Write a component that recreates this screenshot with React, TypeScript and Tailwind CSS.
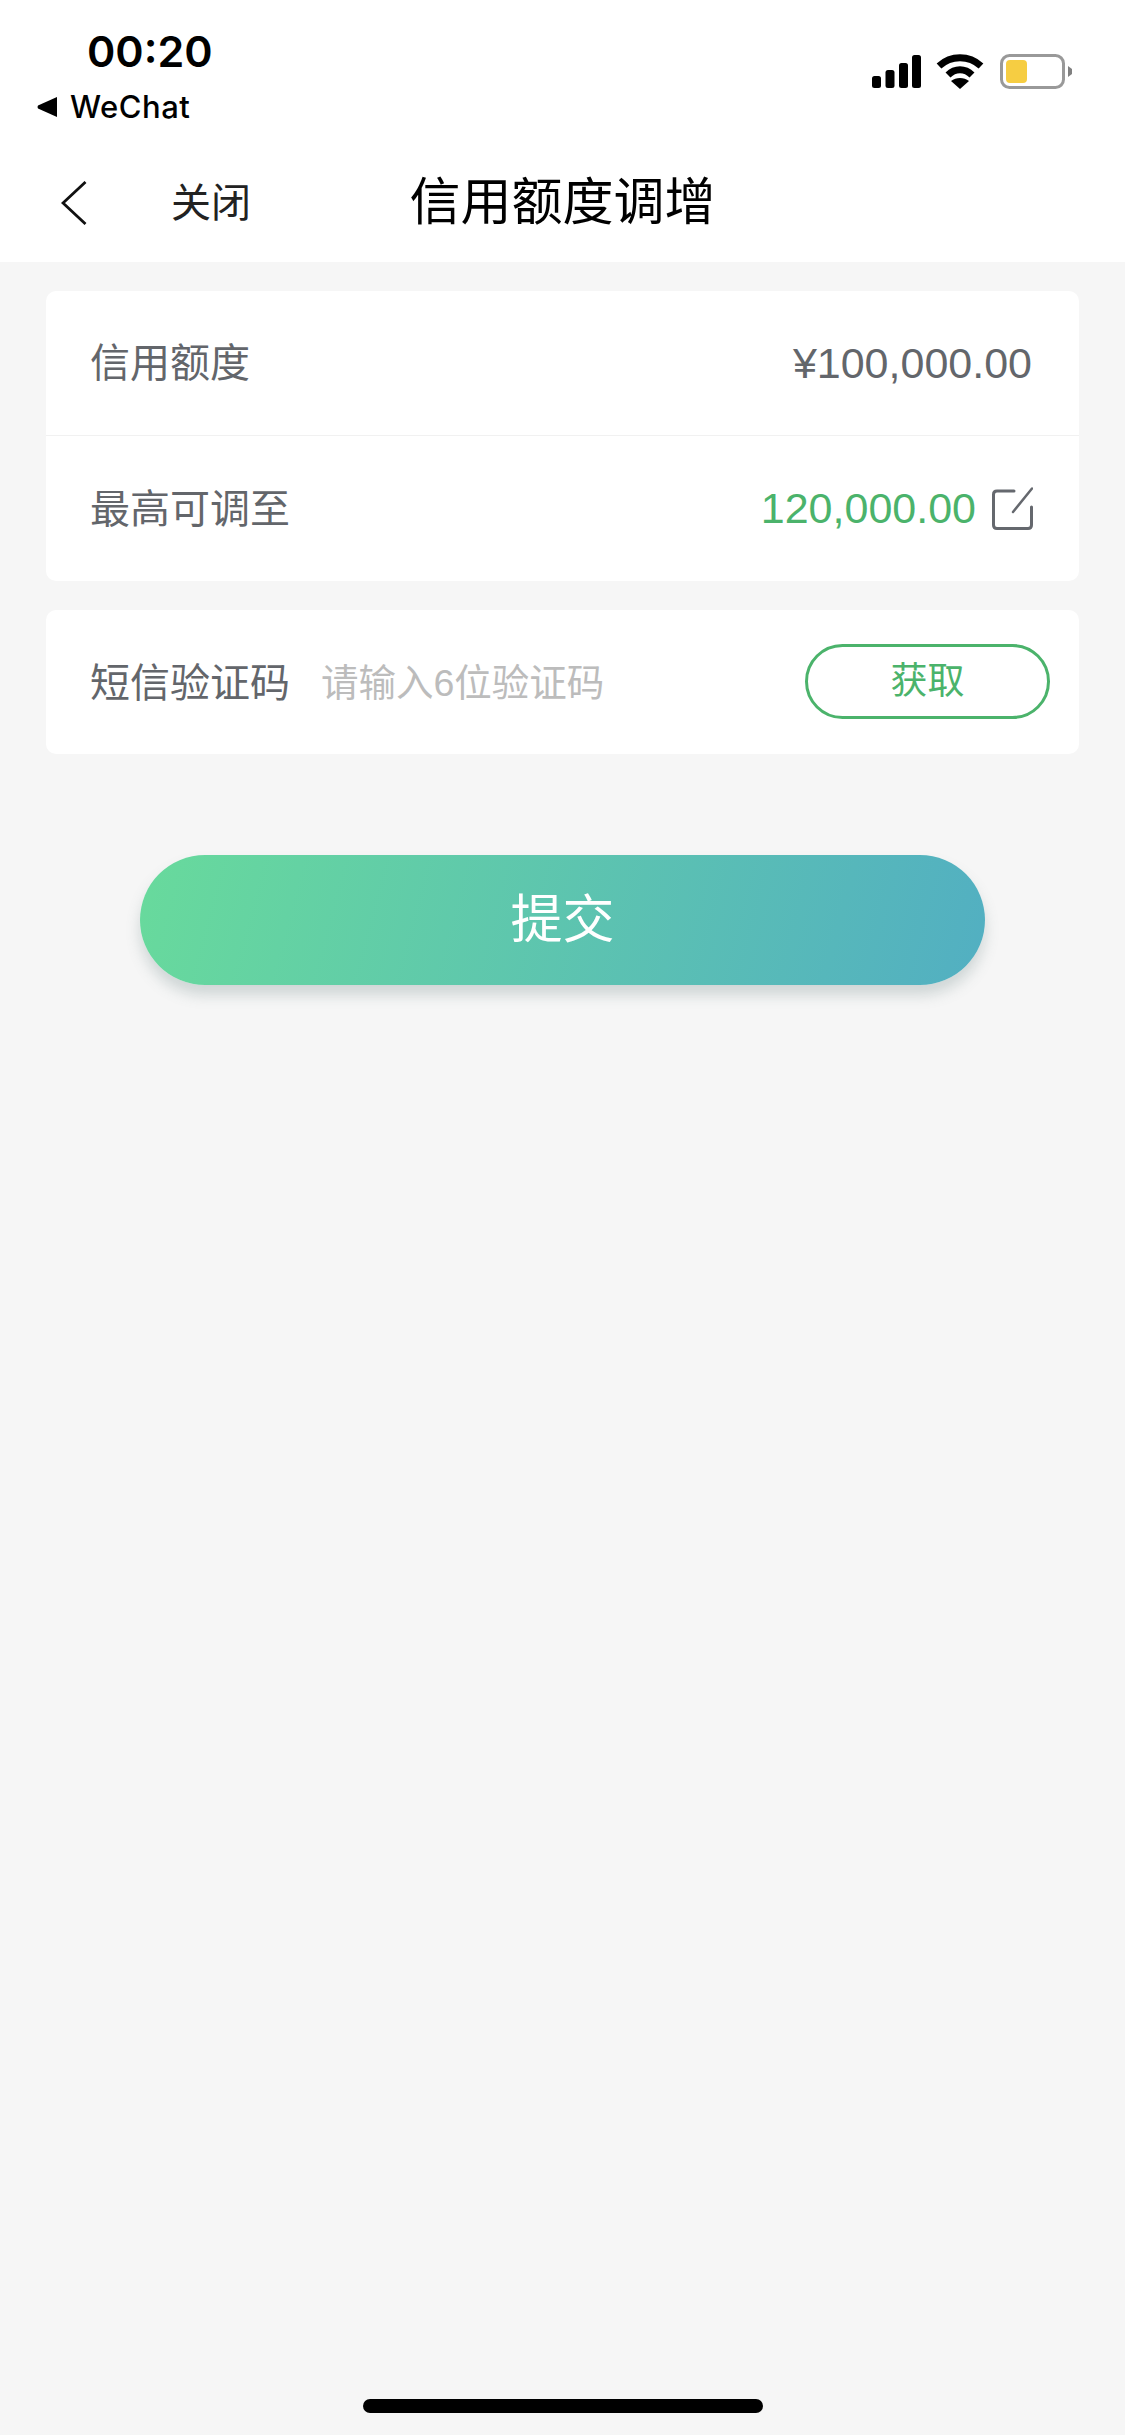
const CJK = "font-['Liberation_Sans','Noto_Sans_CJK_SC',sans-serif]";

function Signal() {
  return (
    <svg width="49" height="33" viewBox="0 0 49 33" fill="#000">
      <rect x="0" y="21" width="9" height="12" rx="2.5" />
      <rect x="13.5" y="15" width="9" height="18" rx="2.5" />
      <rect x="27" y="8" width="9" height="25" rx="2.5" />
      <rect x="40" y="0" width="9" height="33" rx="2.5" />
    </svg>
  );
}

function Wifi() {
  return (
    <svg width="48" height="36" viewBox="0 0 48 36" fill="none">
      <path d="M3 13 C15 2 33 2 45 13" stroke="#000" strokeWidth="7" strokeLinecap="butt" />
      <path d="M12 22 C19 15 29 15 36 22" stroke="#000" strokeWidth="7" strokeLinecap="butt" />
      <path d="M24 36 L15 28 C20 24 28 24 33 28 Z" fill="#000" />
    </svg>
  );
}

function Battery() {
  return (
    <svg width="73" height="35" viewBox="0 0 73 35" fill="none">
      <rect x="1.5" y="1.5" width="62" height="32" rx="8" stroke="#999999" strokeWidth="3" />
      <rect x="6" y="6" width="21" height="23" rx="4" fill="#f6cd42" />
      <path d="M68 12 L72 15 V20 L68 23 Z" fill="#808080" />
    </svg>
  );
}

function EditIcon() {
  return (
    <svg width="41" height="43" viewBox="0 0 41 43" fill="none" stroke="#65686e" strokeWidth="3" strokeLinecap="round">
      <path d="M22 4 H5 Q1.5 4 1.5 7.500 V38 Q1.500 41.500 5 41.500 H36 Q39.500 41.500 39.500 38 V20" />
      <path d="M21 25 L40 1.500" strokeWidth="2.500" />
    </svg>
  );
}

export default function App() {
  return (
    <div className={`min-h-[2435px] w-[1125px] bg-[#f6f6f6] flex flex-col ${CJK}`}>
      <header className="bg-white h-[262px] flex flex-col shrink-0">
        <div className="h-[140px] flex justify-between items-start">
          <div className="flex flex-col">
            <div className="pl-[87px] pt-[26px] text-[43px] leading-[50px] font-semibold text-black font-['Inter',sans-serif]">
              00:20
            </div>
            <div className="pl-[37px] pt-[15px] flex items-center gap-[13px] text-black font-['Inter',sans-serif]">
              <svg width="20" height="20" viewBox="0 0 20 20" fill="#000">
                <path d="M20 0 V20 L1 11.500 Q0 10 1 8.500 Z" />
              </svg>
              <span className="text-[31px] leading-[32px] font-medium tracking-[0.5px]">WeChat</span>
            </div>
          </div>
          <div className="pt-[53px] pr-[52px] flex items-end gap-[16px]">
            <div className="pb-px -mr-px"><Signal /></div>
            <Wifi />
            <Battery />
          </div>
        </div>
        <nav className="h-[122px] grid grid-cols-[1fr_auto_1fr] items-start pt-[40px]">
          <div className="flex items-center h-[46px] pl-[61px] gap-[84px]">
            <svg width="26" height="44" viewBox="0 0 26 44" fill="none" stroke="#111" strokeWidth="2.800">
              <path d="M24.500 1 L2 22 L24.500 43" />
            </svg>
            <span className="text-[40px] leading-[46px] text-[#222]">关闭</span>
          </div>
          <h1 className="text-[51px] leading-[46px] text-black font-normal">信用额度调增</h1>
          <div />
        </nav>
      </header>

      <main className="flex flex-col flex-1 px-[46px] pt-[29px]">
        <section className="bg-white rounded-[10px] flex flex-col">
          <div className="h-[145px] flex items-center justify-between pl-[44px] pr-[47px] border-b border-[#f1f1f1]">
            <span className="text-[40px] text-[#63666b]">信用额度</span>
            <span className="text-[43px] text-[#63666b]">¥100,000.00</span>
          </div>
          <div className="h-[145px] flex items-center justify-between pl-[44px] pr-[46px]">
            <span className="text-[40px] text-[#63666b]">最高可调至</span>
            <div className="flex items-center gap-[16px]">
              <span className="text-[43px] text-[#4bb36b]">120,000.00</span>
              <EditIcon />
            </div>
          </div>
        </section>

        <section className="mt-[29px] bg-white rounded-[10px] h-[144px] flex items-center pl-[44px] pr-[29px]">
          <span className="text-[40px] text-[#63666b] pt-[2px]">短信验证码</span>
          <span className="ml-[31px] text-[37.500px] text-[#bcbcbc] pt-[2px]">请输入6位验证码</span>
          <button className="ml-auto mb-[1px] w-[245px] h-[75px] rounded-full border-[3px] border-[#4bb36b] text-[37px] leading-none text-[#4bb36b]">
            获取
          </button>
        </section>

        <button className="mt-[101px] mx-[94px] h-[130px] rounded-full bg-[linear-gradient(105deg,#68da9c,#52afc2)] text-white text-[52px] shadow-[0_10px_14px_rgba(90,120,120,0.25)]">
          提交
        </button>

        <div className="mt-auto mb-[22px] mx-auto w-[400px] h-[14px] rounded-full bg-black" />
      </main>
    </div>
  );
}
